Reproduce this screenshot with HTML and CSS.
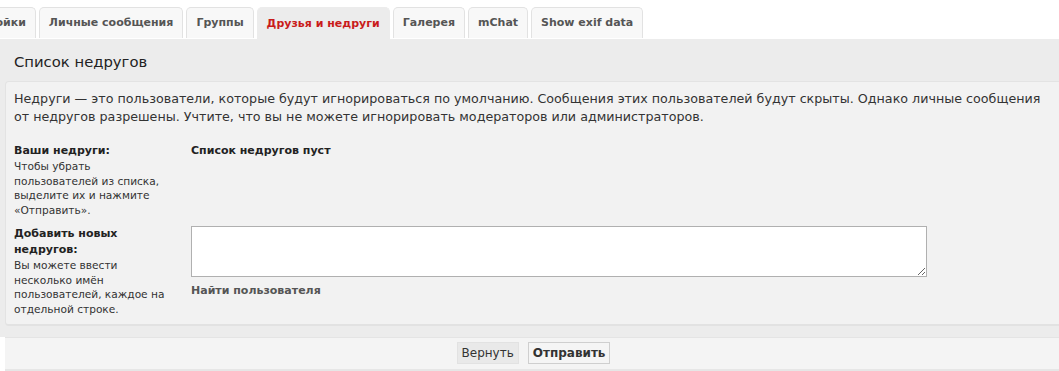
FILE: index.html
```html
<!DOCTYPE html>
<html lang="ru">
<head>
  <meta charset="UTF-8">
  <title>Список недругов</title>
  <link rel="stylesheet" href="styles.css">
</head>
<body>
  <div class="page">
    <ul class="tabs">
      <li class="first"><a href="#">Настройки</a></li>
      <li><a href="#">Личные сообщения</a></li>
      <li><a href="#">Группы</a></li>
      <li class="active"><a href="#">Друзья и недруги</a></li>
      <li><a href="#">Галерея</a></li>
      <li><a href="#">mChat</a></li>
      <li><a href="#">Show exif data</a></li>
    </ul>

    <div class="panel">
      <h3>Список недругов</h3>
      <div class="inner">
        <p class="intro">Недруги — это пользователи, которые будут игнорироваться по умолчанию. Сообщения этих пользователей будут скрыты. Однако личные сообщения от недругов разрешены. Учтите, что вы не можете игнорировать модераторов или администраторов.</p>

        <dl class="row">
          <dt><label>Ваши недруги:</label><span>Чтобы убрать пользователей из списка, выделите их и нажмите «Отправить».</span></dt>
          <dd><strong>Список недругов пуст</strong></dd>
        </dl>

        <dl class="row">
          <dt><label>Добавить новых недругов:</label><span>Вы можете ввести несколько имён пользователей, каждое на отдельной строке.</span></dt>
          <dd>
            <textarea class="names"></textarea>
            <a class="find" href="#">Найти пользователя</a>
          </dd>
        </dl>
      </div>
    </div>

    <div class="submit">
      <button class="btn">Вернуть</button>
      <button class="btn primary">Отправить</button>
    </div>
  </div>
</body>
</html>
```

FILE: styles.css
```css
body { margin: 0; background: #fff; font-family: "DejaVu Sans", Verdana, sans-serif; color: #333; overflow: hidden; }
.page { width: 1062px; }

.tabs { list-style: none; margin: 0 0 0 -52px; padding: 7px 0 0; display: flex; gap: 3px; }
.tabs li a { display: block; height: 30px; line-height: 30px; padding: 0 9px; font-size: 11px; font-weight: bold; color: #555; text-decoration: none; background: #f8f8f8; border: 1px solid #e2e2e2; border-bottom: 0; border-radius: 5px 5px 0 0; }
.tabs li.active a { height: 31px; line-height: 31px; color: #c91b1b; background: #ececec; border-color: #ececec; }

.panel { background: #ececec; padding: 14px 0 11px 5px; }
.panel h3 { margin: 0 0 11px 9px; font-size: 14.8px; font-weight: normal; color: #222; }
.inner { background: #f2f2f2; border: 1px solid #e3e3e3; border-bottom: 2px solid #e2e2e2; border-radius: 4px 0 0 4px; padding: 8px 10px 7px 8px; }
.intro { margin: 0 0 17px; font-size: 12.7px; line-height: 18px; color: #333; }

.row { display: flex; margin: 0 0 8px; }
.row:last-child { margin-bottom: 0; }
.row dt { width: 158px; margin-right: 19px; flex: none; font-size: 10.6px; line-height: 14.7px; color: #333; }
.row dt label { display: block; font-size: 11px; font-weight: bold; line-height: 16px; color: #222; }
.row dt span { display: block; }
.row dd { margin: 0; font-size: 11px; }
.row dd strong { display: block; line-height: 16px; color: #222; }

.names { display: block; width: 736px; height: 51px; box-sizing: border-box; margin: 0; border: 1px solid #b0b0b0; background: #fff; }
.find { display: block; margin-top: 7px; font-size: 11px; font-weight: bold; color: #555; text-decoration: none; }

.submit { background: #f4f4f4; border-top: 1px solid #e4e4e4; border-bottom: 3px solid #e6e6e6; margin-left: 5px; height: 31px; display: flex; justify-content: center; align-items: center; gap: 9px; }
.btn { font-family: "DejaVu Sans", Verdana, sans-serif; font-size: 12px; color: #333; background: #e9e9e9; border: 1px solid #e2e2e2; padding: 2px 4px; height: 22px; }
.btn.primary { font-weight: bold; background: #f5f5f5; border-color: #cfcfcf; }
```
